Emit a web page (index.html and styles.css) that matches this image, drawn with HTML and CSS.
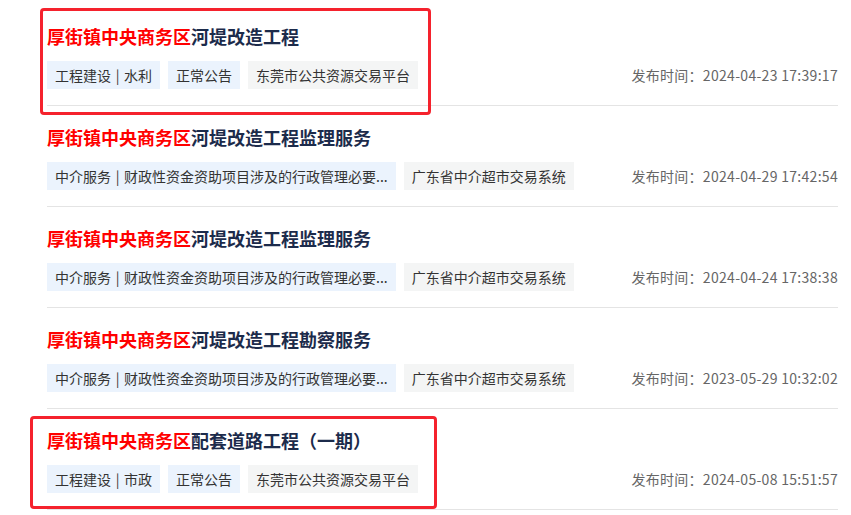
FILE: index.html
```html
<!DOCTYPE html>
<html lang="zh-CN">
<head>
    <meta charset="UTF-8">
    <meta name="viewport" content="width=device-width, initial-scale=1.0">
    <title>厚街镇中央商务区</title>
    <link rel="stylesheet" href="styles.css">
</head>
<body>
    <div class="list">
        <div class="item">
            <h3 class="item-title"><em>厚街镇中央商务区</em>河堤改造工程</h3>
            <div class="item-meta">
                <div class="tags">
                    <span class="tag">工程建设 | 水利</span>
                    <span class="tag">正常公告</span>
                    <span class="tag tag-grey">东莞市公共资源交易平台</span>
                </div>
                <span class="time">发布时间：2024-04-23 17:39:17</span>
            </div>
        </div>

        <div class="item">
            <h3 class="item-title"><em>厚街镇中央商务区</em>河堤改造工程监理服务</h3>
            <div class="item-meta">
                <div class="tags">
                    <span class="tag">中介服务 | 财政性资金资助项目涉及的行政管理必要...</span>
                    <span class="tag tag-grey">广东省中介超市交易系统</span>
                </div>
                <span class="time">发布时间：2024-04-29 17:42:54</span>
            </div>
        </div>

        <div class="item">
            <h3 class="item-title"><em>厚街镇中央商务区</em>河堤改造工程监理服务</h3>
            <div class="item-meta">
                <div class="tags">
                    <span class="tag">中介服务 | 财政性资金资助项目涉及的行政管理必要...</span>
                    <span class="tag tag-grey">广东省中介超市交易系统</span>
                </div>
                <span class="time">发布时间：2024-04-24 17:38:38</span>
            </div>
        </div>

        <div class="item">
            <h3 class="item-title"><em>厚街镇中央商务区</em>河堤改造工程勘察服务</h3>
            <div class="item-meta">
                <div class="tags">
                    <span class="tag">中介服务 | 财政性资金资助项目涉及的行政管理必要...</span>
                    <span class="tag tag-grey">广东省中介超市交易系统</span>
                </div>
                <span class="time">发布时间：2023-05-29 10:32:02</span>
            </div>
        </div>

        <div class="item">
            <h3 class="item-title"><em>厚街镇中央商务区</em>配套道路工程（一期）</h3>
            <div class="item-meta">
                <div class="tags">
                    <span class="tag">工程建设 | 市政</span>
                    <span class="tag">正常公告</span>
                    <span class="tag tag-grey">东莞市公共资源交易平台</span>
                </div>
                <span class="time">发布时间：2024-05-08 15:51:57</span>
            </div>
        </div>

        <!-- highlight marks drawn over the list -->
        <div class="mark mark-first"></div>
        <div class="mark mark-last"></div>
    </div>
</body>
</html>
```

FILE: styles.css
```css
body {
    margin: 0;
    background: #fff;
    font-family: "Noto Sans CJK SC", "Noto Sans", sans-serif;
    color: #333;
}

.list {
    position: relative;
    width: 791px;
    margin-left: 47px;
    padding-top: 5px;
}

.item {
    padding: 19px 0 16px;
    border-bottom: 1px solid #e4e4e4;
}

.item-title {
    margin: 0;
    font-size: 18px;
    line-height: 24px;
    font-weight: bold;
    color: #1c2b4b;
}

.item-title em {
    font-style: normal;
    color: #f00;
}

.item-meta {
    display: flex;
    align-items: center;
    justify-content: space-between;
    margin-top: 13px;
}

.tags {
    display: flex;
    gap: 8px;
}

.tag {
    padding: 0 8px;
    height: 28px;
    line-height: 28px;
    font-size: 14px;
    word-spacing: 1.5px;
    color: #333;
    background: #ebf3fd;
}

.tag-grey {
    background: #f4f5f5;
}

.time {
    font-size: 14px;
    letter-spacing: 0.3px;
    color: #666;
}

/* red annotation boxes */
.mark {
    position: absolute;
    border: 3px solid #f5222d;
    border-radius: 4px;
}

.mark-first {
    left: -7px;
    top: 8px;
    width: 385px;
    height: 101px;
}

.mark-last {
    left: -17px;
    top: 416px;
    width: 401px;
    height: 87px;
}
```
